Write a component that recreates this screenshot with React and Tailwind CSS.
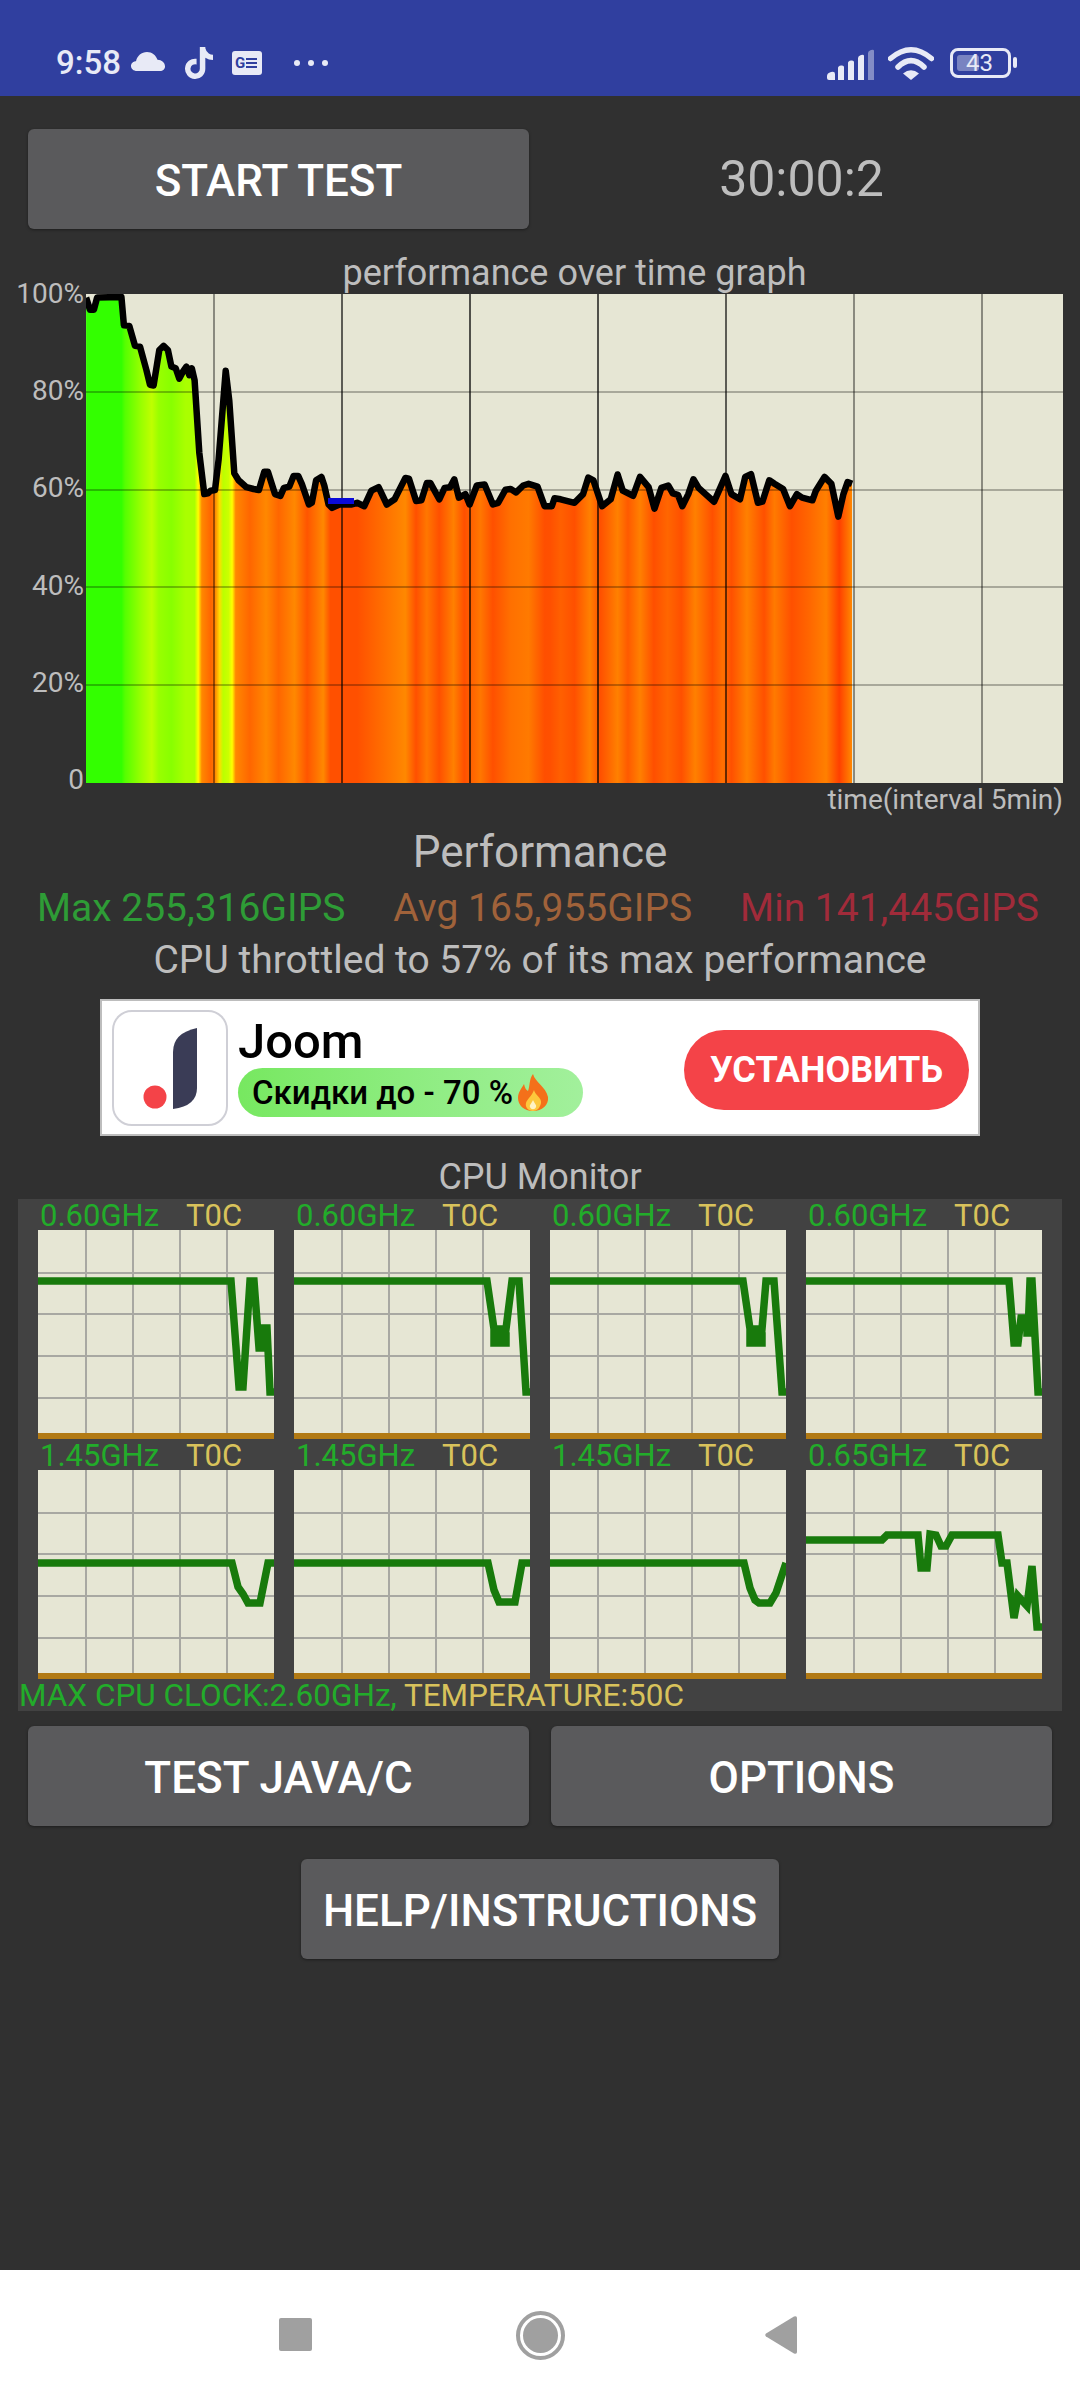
import React from 'react';
import { FaTiktok } from 'react-icons/fa';

// trace of the performance line, read off two crops of the graph
const toPage2 = ([x, y]) => [x / 2.8, 270 + y / 2.9];
const toPage3 = ([x, y]) => [540 + x / 2.9, 270 + y / 2.9];

const LINE_LEFT = [
  [241,80],[252,115],[263,115],[272,80],[340,78],[347,160],[362,162],[378,220],[392,222],[410,290],[420,333],[430,335],
  [446,232],[458,220],[470,232],[480,280],[492,285],[502,315],[512,295],[522,280],[530,305],[537,285],[545,320],[558,530],
  [572,650],[582,648],[590,640],[602,638],[612,550],[632,292],[642,380],[656,590],[668,610],[690,630],[710,635],[725,638],
  [740,585],[750,585],[770,650],[785,655],[795,632],[810,628],[822,597],[835,597],[845,620],[865,680],[873,675],[885,610],
  [900,600],[908,625],[920,680],[930,690],[950,680],[985,680],[1000,675],[1020,685],[1040,640],[1060,630],[1083,680],
  [1105,665],[1135,603],[1145,605],[1165,670],[1180,668],[1195,618],[1205,618],[1230,665],[1245,632],[1260,630],[1272,607],
  [1285,660],[1303,650],[1315,680],[1335,625],[1357,622],[1380,680],[1395,675],[1415,637],[1430,635],[1445,645],[1465,625],
  [1480,620],[1505,628],[1525,685],[1545,685],
].map(toPage2);

const LINE_RIGHT = [
  [42,662],[60,665],[100,675],[125,650],[140,602],[155,610],[180,685],[205,665],[225,593],[240,640],[270,655],[290,600],
  [315,630],[332,692],[352,632],[372,625],[385,648],[400,652],[413,685],[430,650],[445,607],[460,632],[480,650],[505,672],
  [538,597],[555,650],[580,665],[595,600],[612,592],[632,675],[645,672],[665,610],[680,620],[705,635],[725,685],[745,650],
  [760,660],[790,668],[800,640],[825,600],[845,620],[865,715],[880,650],[892,615],[905,620],
].map(toPage3);

const LINE = [...LINE_LEFT, ...LINE_RIGHT];

const HEAT_LEFT = [
  [241,'#33ff00'],[340,'#33ff00'],[350,'#55ff00'],[395,'#99ff00'],[425,'#bfff00'],[445,'#99ff00'],[480,'#88ff00'],[520,'#aaff00'],
  [545,'#aaff00'],[555,'#ffff00'],[565,'#ff8800'],[590,'#ff6600'],[600,'#ff7700'],[615,'#ffdd00'],[625,'#bbff00'],[640,'#ccff00'],
  [650,'#ffff00'],[660,'#ff8800'],[700,'#ff6600'],[745,'#ff8800'],[780,'#ff6600'],[825,'#ff8800'],[860,'#ff5500'],[905,'#ff8800'],
  [925,'#ff5000'],[1000,'#ff5000'],[1135,'#ff8800'],[1165,'#ff5000'],[1195,'#ff7700'],[1230,'#ff5000'],[1270,'#ff8000'],
  [1300,'#ff5000'],[1345,'#ff7700'],[1380,'#ff5000'],[1430,'#ff7000'],[1480,'#ff7a00'],[1525,'#ff4f00'],
].map(([x, c]) => [x / 2.8, c]);

const HEAT_RIGHT = [
  [30,'#ff5000'],[60,'#ff6000'],[100,'#ff5000'],[145,'#ff8000'],[175,'#ff5000'],[225,'#ff8000'],[255,'#ff5a00'],[290,'#ff8000'],
  [330,'#ff4f00'],[370,'#ff6600'],[410,'#ff5000'],[450,'#ff8000'],[500,'#ff5000'],[530,'#ff7000'],[555,'#ff5000'],[600,'#ff8000'],
  [650,'#ff5000'],[680,'#ff7a00'],[730,'#ff5000'],[780,'#ff6600'],[830,'#ff8000'],[868,'#ff4000'],[905,'#ff8800'],
].map(([x, c]) => [540 + x / 2.9, c]);

const HEAT = [...HEAT_LEFT, ...HEAT_RIGHT];

const CORES = [
  { freq: '0.60GHz', line: [[0,51],[193,51],[201,157],[205,157],[212,51],[216,51],[221,118],[226,118],[226,98],[229,98],[232,162],[236,162]] },
  { freq: '0.60GHz', line: [[0,51],[193,51],[200,99],[200,113],[212,113],[212,106],[200,106],[200,99],[212,99],[218,51],[225,51],[232,162],[236,162]] },
  { freq: '0.60GHz', line: [[0,51],[193,51],[200,99],[200,113],[212,113],[212,106],[200,106],[200,99],[212,99],[216,51],[224,51],[232,162],[236,162]] },
  { freq: '0.60GHz', line: [[0,51],[203,51],[208,113],[212,113],[215,88],[221,88],[221,103],[222,103],[224,51],[226,51],[232,162],[236,162]] },
  { freq: '1.45GHz', line: [[0,93],[194,93],[200,117],[205,124],[210,133],[222,133],[230,93],[236,93]] },
  { freq: '1.45GHz', line: [[0,93],[194,93],[200,120],[205,132],[221,132],[228,93],[236,93]] },
  { freq: '1.45GHz', line: [[0,93],[194,93],[200,118],[205,130],[209,133],[220,133],[226,123],[236,93]] },
  { freq: '0.65GHz', line: [[0,70],[76,70],[81,65],[112,65],[115,98],[121,98],[124,64],[130,65],[135,76],[140,76],[146,65],[192,65],[196,93],[201,93],[208,148],[212,126],[221,136],[226,96],[231,157],[236,157]] },
];

const pts = (list) => list.map(([x, y]) => `${x.toFixed(1)},${y.toFixed(1)}`).join(' ');

function Graph() {
  const area = [...LINE, [852, LINE[LINE.length - 1][1]], [852, 783], [86, 783]];
  return (
    <svg className="block" width="977" height="489" viewBox="86 294 977 489">
      <defs>
        <linearGradient id="heat" gradientUnits="userSpaceOnUse" x1="86" x2="852" y1="0" y2="0">
          {HEAT.map(([x, c], i) => (
            <stop key={i} offset={(x - 86) / 766} stopColor={c} />
          ))}
        </linearGradient>
      </defs>
      <rect x="86" y="294" width="977" height="489" fill="#e6e6d4" />
      <polygon points={pts(area)} fill="url(#heat)" />
      {[392, 490, 587, 685].map((y) => (
        <line key={y} x1="86" x2="1063" y1={y} y2={y} stroke="#000" strokeOpacity="0.27" strokeWidth="2" />
      ))}
      {[[214, 0.4], [342, 0.6], [470, 0.65], [598, 0.65], [726, 0.6], [854, 0.4], [982, 0.4]].map(([x, o]) => (
        <line key={x} x1={x} x2={x} y1="294" y2="783" stroke="#000" strokeOpacity={o} strokeWidth="2" />
      ))}
      <polyline points={pts(LINE)} fill="none" stroke="#000" strokeWidth="6.5" strokeLinejoin="round" />
      <rect x="328" y="498" width="26" height="6" fill="#0a0ad8" />
    </svg>
  );
}

function CoreChart({ line }) {
  return (
    <svg className="block" width="236" height="209" viewBox="0 0 236 209">
      <rect width="236" height="209" fill="#e6e6d4" />
      {[48, 95, 142, 189].map((x) => (
        <line key={x} x1={x} x2={x} y1="0" y2="203" stroke="#a8a8a2" strokeWidth="2" />
      ))}
      {[43, 84, 126, 168].map((y) => (
        <line key={y} x1="0" x2="236" y1={y} y2={y} stroke="#a8a8a2" strokeWidth="2" />
      ))}
      <polyline points={pts(line)} fill="none" stroke="#187a0c" strokeWidth="7.5" strokeLinejoin="miter" />
      <rect y="203" width="236" height="6" fill="#b27a14" />
    </svg>
  );
}

function AppButton({ children, className }) {
  return (
    <div className={`h-[100px] pt-[3px] rounded-[6px] bg-[#5a5a5c] shadow-[0_1px_3px_rgba(0,0,0,0.4)] flex items-center justify-center text-[44px] font-medium text-white ${className}`}>
      {children}
    </div>
  );
}

function StatusBar() {
  return (
    <div className="h-[96px] bg-[#303f9f] flex justify-between pl-[56px] pr-[63px] pt-[46px] text-[#e8eaf6]">
      <div className="flex items-start">
        <span className="text-[33px] leading-[34px] font-medium">9:58</span>
        <svg className="ml-[10px] mt-[6px]" width="34" height="19" viewBox="0 0 34 19">
          <path d="M6 19C2.500 19 0 16.800 0 14C0 11.300 2.200 9.300 5 9.200C6.200 3.800 10.500 0 16 0C21 0 25 3.200 26.500 7.800C30.800 8 34 10.800 34 14.500C34 17 32 19 29 19Z" fill="currentColor" />
        </svg>
        <FaTiktok className="ml-[18px] mt-[1px]" size={32} />
        <div className="ml-[17px] mt-[5px] w-[30px] h-[24px] rounded-[3px] bg-[#e8eaf6] flex items-center pl-[3px] gap-[1px]">
          <span className="text-[15px] leading-[15px] font-bold text-[#303f9f]">G</span>
          <span className="flex flex-col gap-[2px]">
            <span className="block w-[11px] h-[2px] bg-[#303f9f]" />
            <span className="block w-[11px] h-[2px] bg-[#303f9f]" />
            <span className="block w-[11px] h-[2px] bg-[#303f9f]" />
          </span>
        </div>
        <div className="ml-[32px] mt-[14px] flex gap-[8px]">
          <span className="w-[6px] h-[6px] rounded-full bg-[#e8eaf6]" />
          <span className="w-[6px] h-[6px] rounded-full bg-[#e8eaf6]" />
          <span className="w-[6px] h-[6px] rounded-full bg-[#e8eaf6]" />
        </div>
      </div>
      <div className="flex items-start">
        <svg width="48" height="31" viewBox="0 0 48 31" className="mt-[3px]">
          <path d="M0 27Q0 24 4 23Q8 22 8 25V31H2Q0 31 0 29Z" fill="currentColor" />
          <path d="M11 19Q11 17 14 16.500Q17 16 17 18V31H11Z" fill="currentColor" />
          <path d="M21 14Q21 12 24 11.500Q27 11 27 13V31H21Z" fill="currentColor" />
          <path d="M31 9Q31 7 34 6Q37 5 37 7V31H31Z" fill="currentColor" />
          <path d="M41 4Q41 2 44 1Q47 0 47 2V31H41Z" fill="currentColor" fillOpacity="0.45" />
        </svg>
        <svg width="46" height="34" viewBox="0 0 46 34" className="ml-[13px]">
          <path d="M2.500 12.500Q23 -5 43.500 12.500" fill="none" stroke="currentColor" strokeWidth="5.500" strokeLinecap="round" />
          <path d="M10 21Q23 8 36 21" fill="none" stroke="currentColor" strokeWidth="5.500" strokeLinecap="round" />
          <path d="M23 34L15 27.500Q23 21 31 27.500Z" fill="currentColor" />
        </svg>
        <div className="ml-[16px] mt-[2px] relative w-[61px] h-[30px] rounded-[8px] border-[3px] border-[#e8eaf6] flex items-center justify-center">
          <div className="absolute left-[4px] top-[4px] bottom-[4px] w-[22px] rounded-[3px] bg-[#e8eaf6]/40" />
          <span className="relative text-[24px] leading-[24px] pr-[2px]">43</span>
        </div>
        <div className="ml-[2px] mt-[11px] w-[4px] h-[11px] rounded-full bg-[#e8eaf6]" />
      </div>
    </div>
  );
}

function AdBanner() {
  return (
    <div className="mx-[100px] h-[137px] bg-white border-2 border-[#bdbdbd] flex items-start pl-[10px]">
      <div className="mt-[9px] w-[116px] h-[116px] rounded-[20px] border-2 border-[#cfcfd6] shrink-0">
        <svg width="112" height="112" viewBox="0 0 112 112">
          <path d="M83 16V76Q83 94 59 97V40Q59 21 83 16Z" fill="#3a3c56" />
          <circle cx="41" cy="85" r="11.500" fill="#f44348" />
        </svg>
      </div>
      <div className="ml-[10px] flex flex-col">
        <span className="text-[49px] leading-[50px] font-medium text-black mt-[16px]">Joom</span>
        <div className="mt-[1px] w-[345px] h-[49px] rounded-full bg-gradient-to-r from-[#77e860] to-[#a2f09c] flex items-center pl-[14px] text-[33px] font-medium text-black">
          Скидки до - 70 %
          <svg className="ml-[3px]" width="35" height="37" viewBox="0 0 35 37">
            <path d="M17 0C19 8 30 13 32 23C33 31 26 37 17 37C8 37 2 31 2 24C2 18 6 14 8 10C9 14 10 16 12 17C14 12 13 5 17 0Z" fill="#f4701a" />
            <path d="M18 16C19 21 26 24 25 29C24 34 21 37 17 37C12 37 9 33 10 29C11 25 16 22 18 16Z" fill="#fdc83c" />
            <path d="M17 26C18 29 21 31 20 33C19 36 15 36 14 33C13 31 16 29 17 26Z" fill="#fff3c4" />
          </svg>
        </div>
      </div>
      <div className="ml-auto mr-[9px] mt-[29px] w-[285px] h-[80px] rounded-full bg-[#f44348] flex items-center justify-center text-[36px] font-bold text-white">
        УСТАНОВИТЬ
      </div>
    </div>
  );
}

export default function App() {
  return (
    <div className="w-[1080px] h-[2400px] flex flex-col bg-[#303030] [font-family:Roboto,sans-serif] overflow-hidden">
      <StatusBar />

      <div className="flex-1 flex flex-col text-[#bdbdbd]">
        <div className="mt-[33px] px-[28px] flex gap-[22px] items-center">
          <AppButton className="w-[501px]">START TEST</AppButton>
          <div className="w-[501px] text-center text-[50px] leading-[56px]">30:00:2</div>
        </div>

        <div className="mt-[24px] pl-[86px] w-[1063px] text-center text-[36px] leading-[41px]">performance over time graph</div>

        <div className="flex">
          <div className="w-[84px] h-[514px] -mt-[14px] -mb-[11px] flex flex-col justify-between items-end text-[28px] leading-[28px]">
            <span>100%</span>
            <span>80%</span>
            <span>60%</span>
            <span>40%</span>
            <span>20%</span>
            <span>0</span>
          </div>
          <div className="ml-[2px]">
            <Graph />
          </div>
        </div>

        <div className="w-[1063px] text-right text-[28px] leading-[34px]">time(interval 5min)</div>

        <div className="mt-[9px] text-center text-[44px] leading-[52px]">Performance</div>

        <div className="mt-[7px] pl-[37px] pr-[41px] flex justify-between text-[39px] leading-[46px]">
          <span className="text-[#2e9c36]">Max 255,316GIPS</span>
          <span className="text-[#a0623a]">Avg 165,955GIPS</span>
          <span className="text-[#a12b3a]">Min 141,445GIPS</span>
        </div>

        <div className="mt-[7px] text-center text-[39px] leading-[44px]">CPU throttled to 57% of its max performance</div>

        <div className="mt-[17px]">
          <AdBanner />
        </div>

        <div className="mt-[19px] text-center text-[36px] leading-[44px]">CPU Monitor</div>

        <div className="ml-[18px] w-[1044px] bg-[#424242]">
          <div className="pl-[20px] grid grid-cols-[repeat(4,236px)] gap-x-[20px]">
            {CORES.map((core, i) => (
              <div key={i}>
                <div className="h-[31px] pt-[1px] flex text-[31px] leading-[31px] pl-[2px]">
                  <span className="w-[146px] text-[#22ac2a]">{core.freq}</span>
                  <span className="text-[#d8c25b]">T0C</span>
                </div>
                <CoreChart line={core.line} />
              </div>
            ))}
          </div>
          <div className="h-[32px] pt-[1px] pl-[1px] text-[31.5px] leading-[32px] whitespace-nowrap">
            <span className="text-[#22ac2a]">MAX CPU CLOCK:2.60GHz, </span>
            <span className="text-[#d8c25b]">TEMPERATURE:50C</span>
          </div>
        </div>

        <div className="mt-[15px] px-[28px] flex gap-[22px]">
          <AppButton className="w-[501px]">TEST JAVA/C</AppButton>
          <AppButton className="w-[501px]">OPTIONS</AppButton>
        </div>

        <div className="mt-[33px] flex justify-center">
          <AppButton className="w-[478px]">HELP/INSTRUCTIONS</AppButton>
        </div>
      </div>

      <div className="h-[130px] bg-white flex items-start pt-[46px] text-[#a0a0a0]">
        <div className="ml-[279px] mt-[2px] w-[33px] h-[33px] rounded-[2px] bg-[#a0a0a0]" />
        <div className="ml-[204px] -mt-[5px] w-[49px] h-[49px] rounded-full border-[4px] border-[#a0a0a0] p-[3px]">
          <div className="w-full h-full rounded-full bg-[#a0a0a0]" />
        </div>
        <svg className="ml-[200px]" width="32" height="38" viewBox="0 0 32 38">
          <path d="M1 17.500L29 0.500Q32 -0.500 32 2V36Q32 38.500 29 37.500L1 20.500Q-0.500 19 1 17.500Z" fill="currentColor" />
        </svg>
      </div>
    </div>
  );
}
